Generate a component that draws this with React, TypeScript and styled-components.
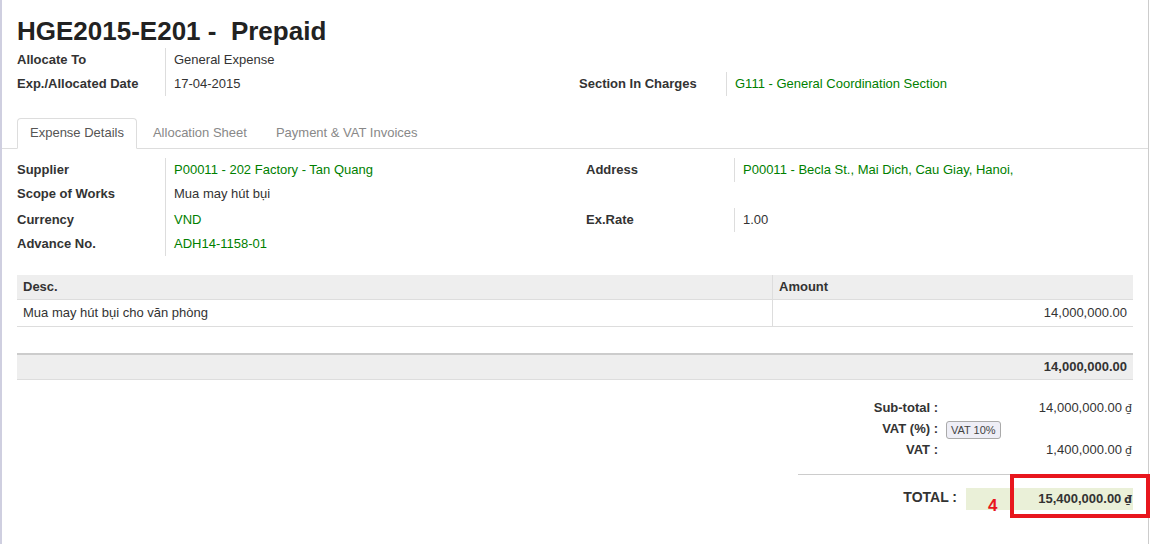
import React from "react";
import styled, { createGlobalStyle } from "styled-components";

const Global = createGlobalStyle`
  html, body { margin: 0; padding: 0; background: #fff; }
  body {
    font-family: "Liberation Sans", Arial, sans-serif;
    font-size: 13px;
    color: #333;
  }
`;

const Page = styled.div`
  display: flex;
  min-height: 544px;
  border-left: 2px solid #cfcfe0;
  box-sizing: border-box;
`;

const Sheet = styled.div`
  position: relative;
  width: 1116px;
  padding: 16px 15px 0;
  border-right: 1px solid #ccc;
`;

const Title = styled.h1`
  margin: 0;
  font-size: 26px;
  line-height: 30px;
  font-weight: bold;
  color: #222;
  white-space: pre;
`;

const InfoGrid = styled.div<{ $cols: string; $rows?: string; $top: number }>`
  display: grid;
  grid-template-columns: ${(p) => p.$cols};
  grid-template-rows: ${(p) => p.$rows || "none"};
  grid-auto-rows: 24px;
  margin-top: ${(p) => p.$top}px;
`;

const Label = styled.div`
  font-weight: bold;
  line-height: 24px;
  color: #333;
  white-space: nowrap;
`;

const Value = styled.div<{ $link?: boolean }>`
  border-left: 1px solid #ddd;
  padding-left: 8px;
  line-height: 24px;
  color: ${(p) => (p.$link ? "#008000" : "#333")};
  white-space: nowrap;
`;

const Empty = styled.div``;

const TabBar = styled.div`
  display: flex;
  margin: 22px -15px 0;
  padding: 0 15px;
  border-bottom: 1px solid #ddd;
`;

const Tab = styled.div<{ $active?: boolean }>`
  padding: 4px 12px 5px;
  line-height: 20px;
  margin-right: 3px;
  margin-bottom: -1px;
  border: 1px solid ${(p) => (p.$active ? "#ddd" : "transparent")};
  border-bottom-color: ${(p) => (p.$active ? "#fff" : "transparent")};
  border-radius: 4px 4px 0 0;
  background: ${(p) => (p.$active ? "#fff" : "transparent")};
  color: ${(p) => (p.$active ? "#555" : "#888")};
  white-space: nowrap;
`;

const Lines = styled.div`
  display: grid;
  grid-template-columns: 755px 1fr;
  margin-top: 19px;
`;

const HeadCell = styled.div<{ $divider?: boolean }>`
  background: #eee;
  line-height: 24px;
  padding: 0 6px;
  font-weight: bold;
  color: #333;
  border-bottom: 1px solid #ddd;
  border-left: ${(p) => (p.$divider ? "1px solid #ddd" : "none")};
`;

const BodyCell = styled.div<{ $divider?: boolean; $right?: boolean }>`
  line-height: 24px;
  padding: 1px 6px;
  border-bottom: 1px solid #ddd;
  border-left: ${(p) => (p.$divider ? "1px solid #ddd" : "none")};
  text-align: ${(p) => (p.$right ? "right" : "left")};
  color: #333;
`;

const Spacer = styled.div`
  grid-column: 1 / -1;
  height: 26px;
`;

const FootCell = styled.div`
  grid-column: 1 / -1;
  background: #eee;
  border-top: 2px solid #ccc;
  border-bottom: 1px solid #ddd;
  line-height: 24px;
  padding: 0 6px;
  text-align: right;
  font-weight: bold;
  color: #333;
`;

const Totals = styled.div`
  width: 335px;
  margin: 18px 0 0 auto;
`;

const SummaryGrid = styled.div`
  display: grid;
  grid-template-columns: 140px 1fr;
  grid-template-rows: 20px 22px 20px;
  column-gap: 8px;
  align-items: center;
`;

const SumLabel = styled.div`
  text-align: right;
  font-weight: bold;
  line-height: 20px;
  color: #333;
`;

const SumValue = styled.div<{ $left?: boolean }>`
  text-align: ${(p) => (p.$left ? "left" : "right")};
  padding-right: 1px;
  line-height: 20px;
  color: #333;
`;

const Currency = styled.span`
  font-family: "DejaVu Sans", "Liberation Sans", sans-serif;
  font-size: 11px;
  margin-left: 3px;
`;

const Badge = styled.span`
  display: inline-block;
  font-size: 11px;
  line-height: 16px;
  padding: 0 4px;
  border: 1px solid #aaa;
  border-radius: 3px;
  background: #eeeef6;
  color: #444;
  vertical-align: middle;
`;

const Rule = styled.div`
  margin-top: 14px;
  border-top: 1px solid #ccc;
`;

const TotalGrid = styled.div`
  display: grid;
  grid-template-columns: 159px 1fr;
  column-gap: 9px;
  margin-top: 13px;
`;

const TotalLabel = styled.div`
  text-align: right;
  font-weight: bold;
  font-size: 14px;
  line-height: 18px;
  color: #333;
`;

const TotalValue = styled.div`
  position: relative;
  background: #eaf0d8;
  height: 22px;
  line-height: 22px;
  text-align: right;
  padding-right: 1px;
  font-weight: bold;
  color: #333;
`;

const RedFrame = styled.div`
  position: absolute;
  left: 44px;
  top: -14px;
  width: 140px;
  height: 44px;
  box-sizing: border-box;
  border: 4px solid #e8161d;
  pointer-events: none;
`;

const Marker = styled.span`
  position: absolute;
  left: 22px;
  top: 9px;
  font-size: 17px;
  line-height: 17px;
  font-weight: bold;
  color: #e8161d;
`;

export default function App() {
  return (
    <>
      <Global />
      <Page>
        <Sheet>
          <Title>{"HGE2015-E201 -  Prepaid"}</Title>

          <InfoGrid $cols="148px 414px 147px 1fr" $top={2}>
            <Label>Allocate To</Label>
            <Value>General Expense</Value>
            <Empty />
            <Empty />
            <Label>Exp./Allocated Date</Label>
            <Value>17-04-2015</Value>
            <Label>Section In Charges</Label>
            <Value $link>G111 - General Coordination Section</Value>
          </InfoGrid>

          <TabBar>
            <Tab $active>Expense Details</Tab>
            <Tab>Allocation Sheet</Tab>
            <Tab>Payment &amp; VAT Invoices</Tab>
          </TabBar>

          <InfoGrid $cols="148px 421px 148px 1fr" $rows="24px 26px 24px 24px" $top={9}>
            <Label>Supplier</Label>
            <Value $link>P00011 - 202 Factory - Tan Quang</Value>
            <Label>Address</Label>
            <Value $link>P00011 - Becla St., Mai Dich, Cau Giay, Hanoi,</Value>
            <Label>Scope of Works</Label>
            <Value>Mua may hút bụi</Value>
            <Empty />
            <Empty />
            <Label>Currency</Label>
            <Value $link>VND</Value>
            <Label>Ex.Rate</Label>
            <Value>1.00</Value>
            <Label>Advance No.</Label>
            <Value $link>ADH14-1158-01</Value>
            <Empty />
            <Empty />
          </InfoGrid>

          <Lines>
            <HeadCell>Desc.</HeadCell>
            <HeadCell $divider>Amount</HeadCell>
            <BodyCell>Mua may hút bụi cho văn phòng</BodyCell>
            <BodyCell $divider $right>14,000,000.00</BodyCell>
            <Spacer />
            <FootCell>14,000,000.00</FootCell>
          </Lines>

          <Totals>
            <SummaryGrid>
              <SumLabel>Sub-total :</SumLabel>
              <SumValue>
                14,000,000.00<Currency>₫</Currency>
              </SumValue>
              <SumLabel>VAT (%) :</SumLabel>
              <SumValue $left>
                <Badge>VAT 10%</Badge>
              </SumValue>
              <SumLabel>VAT :</SumLabel>
              <SumValue>
                1,400,000.00<Currency>₫</Currency>
              </SumValue>
            </SummaryGrid>
            <Rule />
            <TotalGrid>
              <TotalLabel>TOTAL :</TotalLabel>
              <TotalValue>
                15,400,000.00<Currency>₫</Currency>
                <Marker>4</Marker>
                <RedFrame />
              </TotalValue>
            </TotalGrid>
          </Totals>
        </Sheet>
      </Page>
    </>
  );
}
